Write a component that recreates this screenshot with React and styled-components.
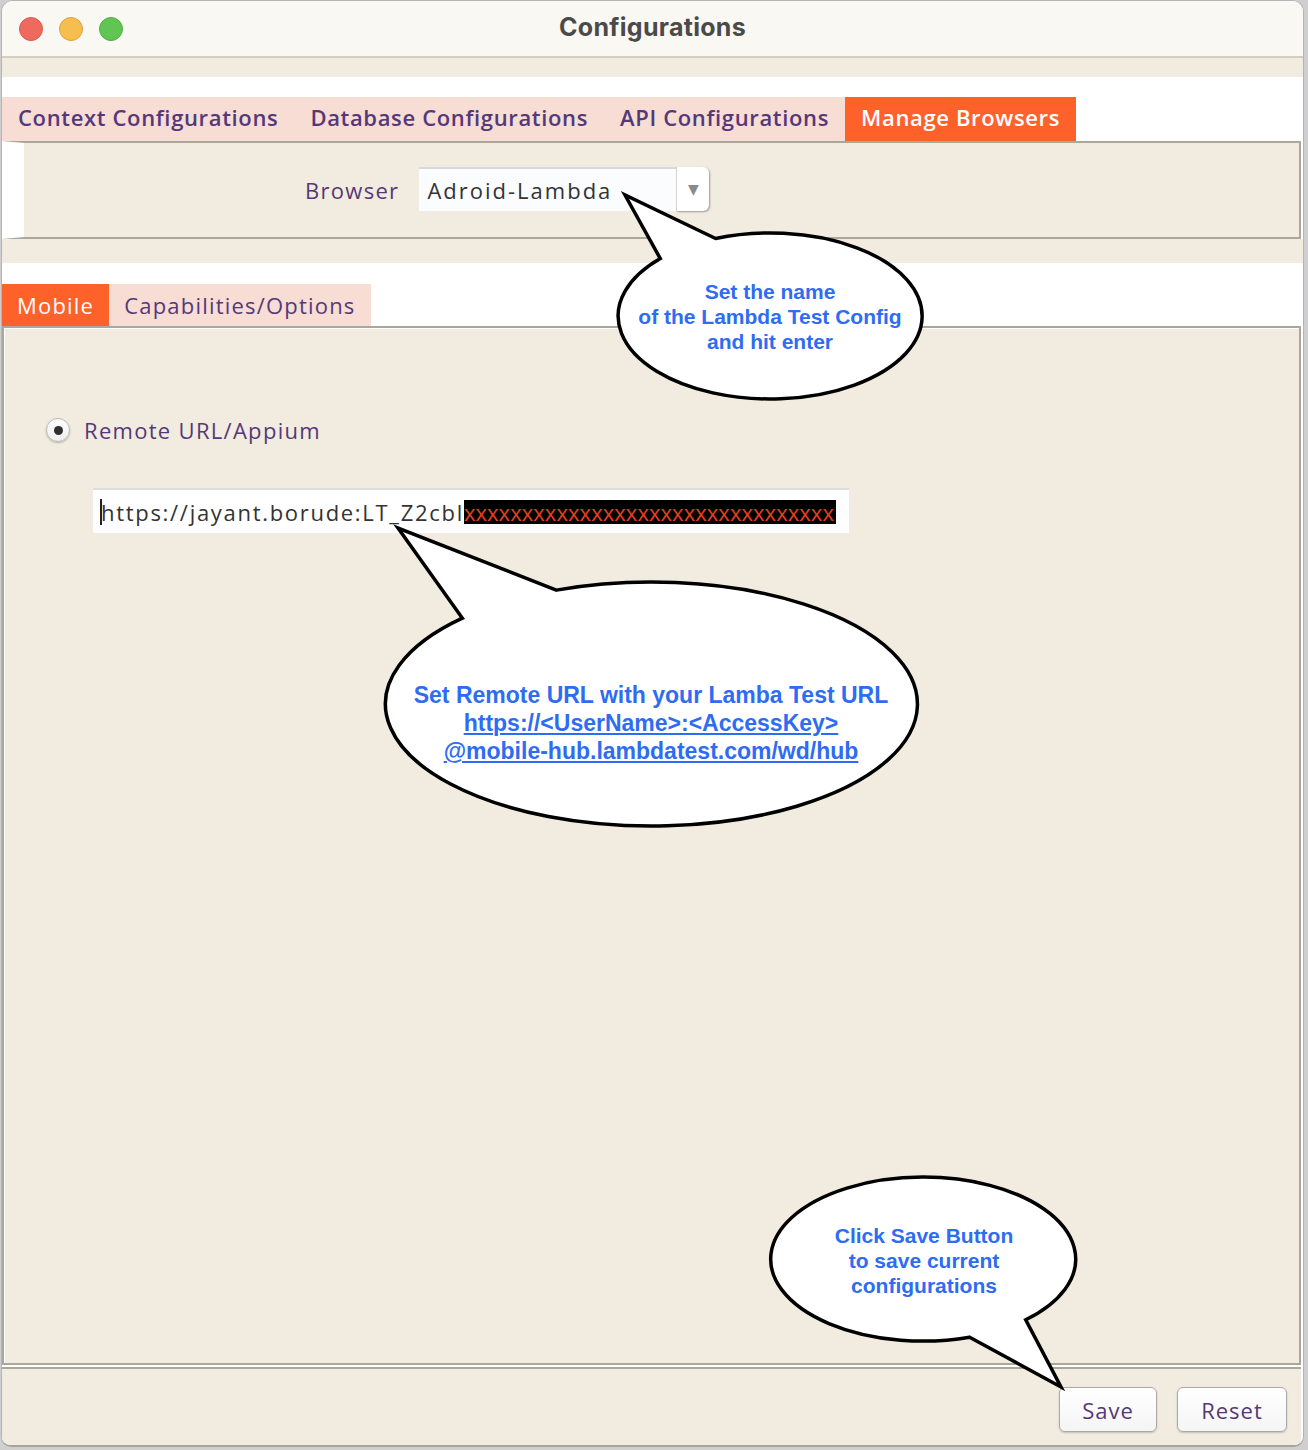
import styled, { createGlobalStyle } from "styled-components";

const GlobalStyle = createGlobalStyle`
  html, body {
    margin: 0;
    padding: 0;
  }
  body {
    background: #cfcfd2;
    font-family: "Open Sans", "Noto Sans", sans-serif;
  }
`;

const Page = styled.div`
  position: relative;
  width: 1308px;
  height: 1450px;
  padding-left: 1px;
  box-sizing: border-box;
  overflow: hidden;
`;

const Window = styled.div`
  width: 1303px;
  height: 1447px;
  box-sizing: border-box;
  border: 1px solid #b4b4b4;
  border-bottom: 2px solid #a8a597;
  border-radius: 12px 12px 10px 10px;
  background: #fff;
  display: flex;
  flex-direction: column;
  overflow: hidden;
`;

const TitleBar = styled.div`
  flex: none;
  height: 55px;
  background: #faf8f2;
  border-bottom: 2px solid #d4cec1;
  display: grid;
  grid-template-columns: 1fr auto 1fr;
  align-items: center;
  padding-left: 17px;
`;

const Lights = styled.div`
  display: flex;
  gap: 16px;
`;

const Light = styled.span`
  width: 24px;
  height: 24px;
  border-radius: 50%;
  box-sizing: border-box;
  background: ${(p) => p.$fill};
  border: 1px solid ${(p) => p.$edge};
`;

const Title = styled.div`
  font-family: "Inter", "Liberation Sans", sans-serif;
  font-weight: 700;
  font-size: 25px;
  letter-spacing: 0.3px;
  color: #4a4a4a;
  padding-right: 17px;
  margin-top: -3px;
`;

const Strip = styled.div`
  flex: none;
  height: ${(p) => p.$h}px;
  background: #f2ece0;
`;

const TabStrip = styled.div`
  flex: none;
  display: flex;
  background: #fff;
  padding-top: ${(p) => p.$top}px;
`;

const Tab = styled.div`
  height: ${(p) => p.$h}px;
  box-sizing: border-box;
  padding: 0 ${(p) => (p.$bold ? 16 : 15)}px ${(p) => (p.$bold ? 4 : 0)}px;
  display: flex;
  align-items: center;
  font-size: 22px;
  font-weight: ${(p) => (p.$bold ? 600 : 400)};
  letter-spacing: ${(p) => (p.$bold ? 0.65 : 1.2)}px;
  color: ${(p) => (p.$active ? "#fff" : "#553878")};
  background: ${(p) => (p.$active ? "#ff612b" : "#f7ddd4")};
  white-space: nowrap;
`;

const BrowserPanel = styled.div`
  flex: none;
  height: 94px;
  margin-right: 2px;
  background: #f2ece0;
  border-top: 2px solid #aca899;
  border-bottom: 2px solid #aca899;
  border-right: 2px solid #aca899;
  border-left: 22px solid #fff;
  display: flex;
  align-items: center;
  padding-left: 281px;
`;

const Label = styled.span`
  font-size: 22px;
  letter-spacing: 1.3px;
  color: #553878;
`;

const Combo = styled.div`
  margin-left: 20px;
  margin-top: -2px;
  width: 290px;
  height: 44px;
  display: flex;
`;

const ComboText = styled.div`
  flex: 1;
  background: #fbfcfe;
  border-top: 2px solid #d8d9dc;
  padding-left: 8px;
  display: flex;
  align-items: center;
  font-size: 22px;
  color: #333;
  letter-spacing: 2px;
`;

const ComboArrow = styled.div`
  width: 32px;
  background: #fff;
  border-left: 1px solid #d4d4d4;
  border-radius: 0 6px 6px 0;
  box-shadow: 1px 1px 2px rgba(0, 0, 0, 0.35);
  display: flex;
  align-items: center;
  justify-content: center;
  color: #8a8a8a;
  font-size: 14px;
  font-family: "DejaVu Sans", sans-serif;
`;

const MainPanel = styled.div`
  flex: 1;
  margin-right: 2px;
  background: #f2ece0;
  border: 2px solid #aca899;
  box-shadow: inset 1px 1px 0 #fff;
  padding: 87px 0 0 42px;
`;

const RadioRow = styled.div`
  display: flex;
  align-items: center;
  gap: 14px;
  height: 30px;
`;

const Radio = styled.span`
  width: 24px;
  height: 24px;
  box-sizing: border-box;
  border-radius: 50%;
  background: linear-gradient(#ffffff, #eeeeee);
  border: 1px solid #b9b9b9;
  box-shadow: 0 1px 2px rgba(0, 0, 0, 0.25);
  display: flex;
  align-items: center;
  justify-content: center;
  &::after {
    content: "";
    width: 9px;
    height: 9px;
    border-radius: 50%;
    background: #2f2f2f;
  }
`;

const UrlField = styled.div`
  margin: 43px 0 0 47px;
  width: 756px;
  height: 45px;
  box-sizing: border-box;
  background: #fff;
  border-top: 2px solid #dcdcdc;
  display: flex;
  align-items: center;
  padding-left: 7px;
  font-size: 22px;
  letter-spacing: 1.7px;
  color: #333;
  white-space: nowrap;
`;

const Caret = styled.span`
  width: 2px;
  height: 26px;
  background: #222;
  margin-right: -1px;
`;

const Masked = styled.span`
  display: inline-block;
  height: 24px;
  line-height: 24px;
  padding-right: 2px;
  background: #000;
  color: #e8401f;
  font-size: 22px;
  letter-spacing: 0.05px;
`;

const BottomPanel = styled.div`
  flex: none;
  height: 80px;
  box-sizing: border-box;
  margin-right: 2px;
  background: #f2ece0;
  border-top: 2px solid #fff;
  box-shadow: inset 0 2px 0 #aca899;
  display: flex;
  justify-content: flex-end;
  align-items: flex-start;
  gap: 20px;
  padding: 20px 14px 0 0;
`;

const Button = styled.button`
  width: ${(p) => p.$w}px;
  height: 45px;
  background: linear-gradient(#ffffff, #f5f5f5);
  border: 1px solid #a9a9a9;
  border-radius: 6px;
  box-shadow: 0 1px 2px rgba(0, 0, 0, 0.2);
  font-family: "Open Sans", "Noto Sans", sans-serif;
  font-size: 22px;
  color: #553878;
  letter-spacing: 1px;
  padding: 0;
`;

const Overlay = styled.svg`
  position: absolute;
  left: 0;
  top: 0;
  pointer-events: none;
`;

const Note = styled.div`
  position: absolute;
  left: ${(p) => p.$x}px;
  top: ${(p) => p.$y}px;
  transform: translate(-50%, -50%);
  text-align: center;
  white-space: nowrap;
  font-family: "Liberation Sans", Arial, sans-serif;
  font-weight: 700;
  font-size: ${(p) => p.$size}px;
  line-height: ${(p) => p.$lh}px;
  color: #2e6cf3;
`;

const Link = styled.span`
  text-decoration: underline;
  text-decoration-thickness: 2px;
  text-underline-offset: 2px;
`;

const bubbles = [
  "M715.6 238.5 L625 195 L660.3 258.6 A152 83 0 1 0 715.6 238.5 Z",
  "M556.3 590.1 L398 528 L462.4 618.2 A266 122 0 1 0 556.3 590.1 Z",
  "M969.6 1337.2 L1061 1387 L1025.7 1319.8 A152.5 82 0 1 0 969.6 1337.2 Z",
];

const topTabs = ["Context Configurations", "Database Configurations", "API Configurations", "Manage Browsers"];

const App = () => {
  return (
    <>
      <GlobalStyle />
      <Page>
        <Window>
          <TitleBar>
            <Lights>
              <Light $fill="#ee6a5f" $edge="#d85a4f" />
              <Light $fill="#f5be4f" $edge="#dca33c" />
              <Light $fill="#61c554" $edge="#50ad44" />
            </Lights>
            <Title>Configurations</Title>
            <span />
          </TitleBar>
          <Strip $h={19} />
          <TabStrip $top={20}>
            {topTabs.map((t, i) => (
              <Tab key={t} $h={44} $bold $active={i === 3}>
                {t}
              </Tab>
            ))}
          </TabStrip>
          <BrowserPanel>
            <Label>Browser</Label>
            <Combo>
              <ComboText>Adroid-Lambda</ComboText>
              <ComboArrow>▼</ComboArrow>
            </Combo>
          </BrowserPanel>
          <Strip $h={24} />
          <TabStrip $top={21}>
            <Tab $h={42} $active>
              Mobile
            </Tab>
            <Tab $h={42}>Capabilities/Options</Tab>
          </TabStrip>
          <MainPanel>
            <RadioRow>
              <Radio />
              <Label>Remote URL/Appium</Label>
            </RadioRow>
            <UrlField>
              <Caret />
              https://jayant.borude:LT_Z2cbl
              <Masked>{"x".repeat(32)}</Masked>
            </UrlField>
          </MainPanel>
          <BottomPanel>
            <Button $w={98}>Save</Button>
            <Button $w={110}>Reset</Button>
          </BottomPanel>
        </Window>

        <Overlay width="1308" height="1450" viewBox="0 0 1308 1450">
          {bubbles.map((d) => (
            <path key={d} d={d} fill="#fff" stroke="#000" strokeWidth="3.5" strokeLinejoin="miter" />
          ))}
        </Overlay>
        <Note $x={770} $y={316} $size={21} $lh={25}>
          Set the name
          <br />
          of the Lambda Test Config
          <br />
          and hit enter
        </Note>
        <Note $x={651} $y={723} $size={23} $lh={28}>
          Set Remote URL with your Lamba Test URL
          <br />
          <Link>https://&lt;UserName&gt;:&lt;AccessKey&gt;</Link>
          <br />
          <Link>@mobile-hub.lambdatest.com/wd/hub</Link>
        </Note>
        <Note $x={924} $y={1260} $size={21} $lh={25}>
          Click Save Button
          <br />
          to save current
          <br />
          configurations
        </Note>
      </Page>
    </>
  );
};

export default App;
